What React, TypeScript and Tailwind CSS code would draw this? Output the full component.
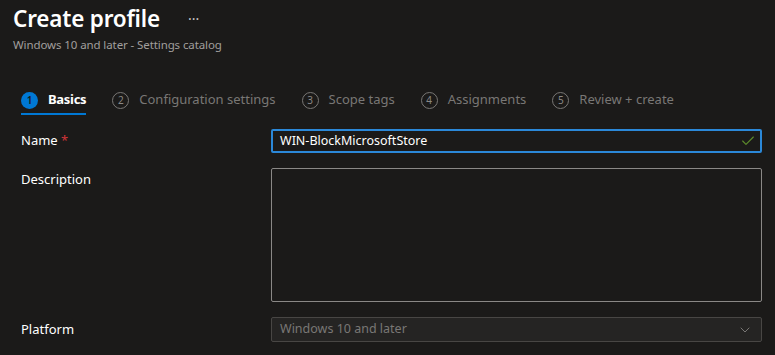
import { Check, ChevronDown } from 'lucide-react';

const steps = [
  { n: '1', label: 'Basics', active: true },
  { n: '2', label: 'Configuration settings' },
  { n: '3', label: 'Scope tags' },
  { n: '4', label: 'Assignments' },
  { n: '5', label: 'Review + create' },
];

export default function App() {
  return (
    <div
      className="w-[775px] h-[355px] overflow-hidden bg-[#1b1a19] text-white"
      style={{ fontFamily: '"Segoe UI", "Noto Sans", sans-serif' }}
    >
      {/* Header */}
      <div className="pl-[13px] pt-[1px]">
        <div className="flex items-center">
          <h1 className="text-[22.5px] leading-[36px] font-semibold tracking-[-0.2px]">Create profile</h1>
          <span className="ml-[28px] text-[14px] text-[#c8c6c4] -mt-[1px]">···</span>
        </div>
        <p className="text-[11.5px] leading-[16px] text-[#a19f9d] tracking-[-0.1px]">
          Windows 10 and later - Settings catalog
        </p>
      </div>

      {/* Wizard steps */}
      <div className="flex pl-[21px] mt-[34px] gap-[26px]">
        {steps.map((s) => (
          <div
            key={s.n}
            className={`flex items-center h-[28px] gap-[10px] border-b-2 ${
              s.active ? 'border-[#0078d4]' : 'border-transparent'
            }`}
          >
            <span
              className={`w-[17px] h-[17px] rounded-full flex items-center justify-center text-[10px] leading-none ${
                s.active
                  ? 'bg-[#0078d4] text-[#1b1a19] font-semibold'
                  : 'border border-[#797775] text-[#8a8886]'
              }`}
            >
              {s.n}
            </span>
            <span
              className={`text-[13px] ${
                s.active ? 'font-bold text-white tracking-[-0.3px]' : 'text-[#797775]'
              }`}
            >
              {s.label}
            </span>
          </div>
        ))}
      </div>

      {/* Form */}
      <div className="pl-[21px] pr-[13px] mt-[14px] flex flex-col">
        <div className="flex items-center">
          <label className="w-[250px] text-[13px]">
            Name <span className="text-[#d13438]">*</span>
          </label>
          <div className="flex-1 h-[24px] border-2 border-[#2b88d8] rounded-[2px] flex items-center pl-[7px] pr-[4px]">
            <span className="flex-1 text-[12.5px] text-white">WIN-BlockMicrosoftStore</span>
            <Check className="w-[16px] h-[16px] text-[#5c8a2b]" strokeWidth={1.75} />
          </div>
        </div>

        <div className="flex mt-[15px]">
          <label className="w-[250px] text-[13px] pt-[2px]">Description</label>
          <div className="flex-1 h-[134px] border border-[#8a8886] rounded-[2px]" />
        </div>

        <div className="flex items-center mt-[15px]">
          <label className="w-[250px] text-[13px]">Platform</label>
          <div className="flex-1 h-[25px] border border-[#484644] bg-[#252423] rounded-[2px] flex items-center pl-[8px] pr-[8px]">
            <span className="flex-1 text-[12.5px] text-[#797775]">Windows 10 and later</span>
            <ChevronDown className="w-[16px] h-[16px] text-[#8a8886]" strokeWidth={1.25} />
          </div>
        </div>
      </div>
    </div>
  );
}
